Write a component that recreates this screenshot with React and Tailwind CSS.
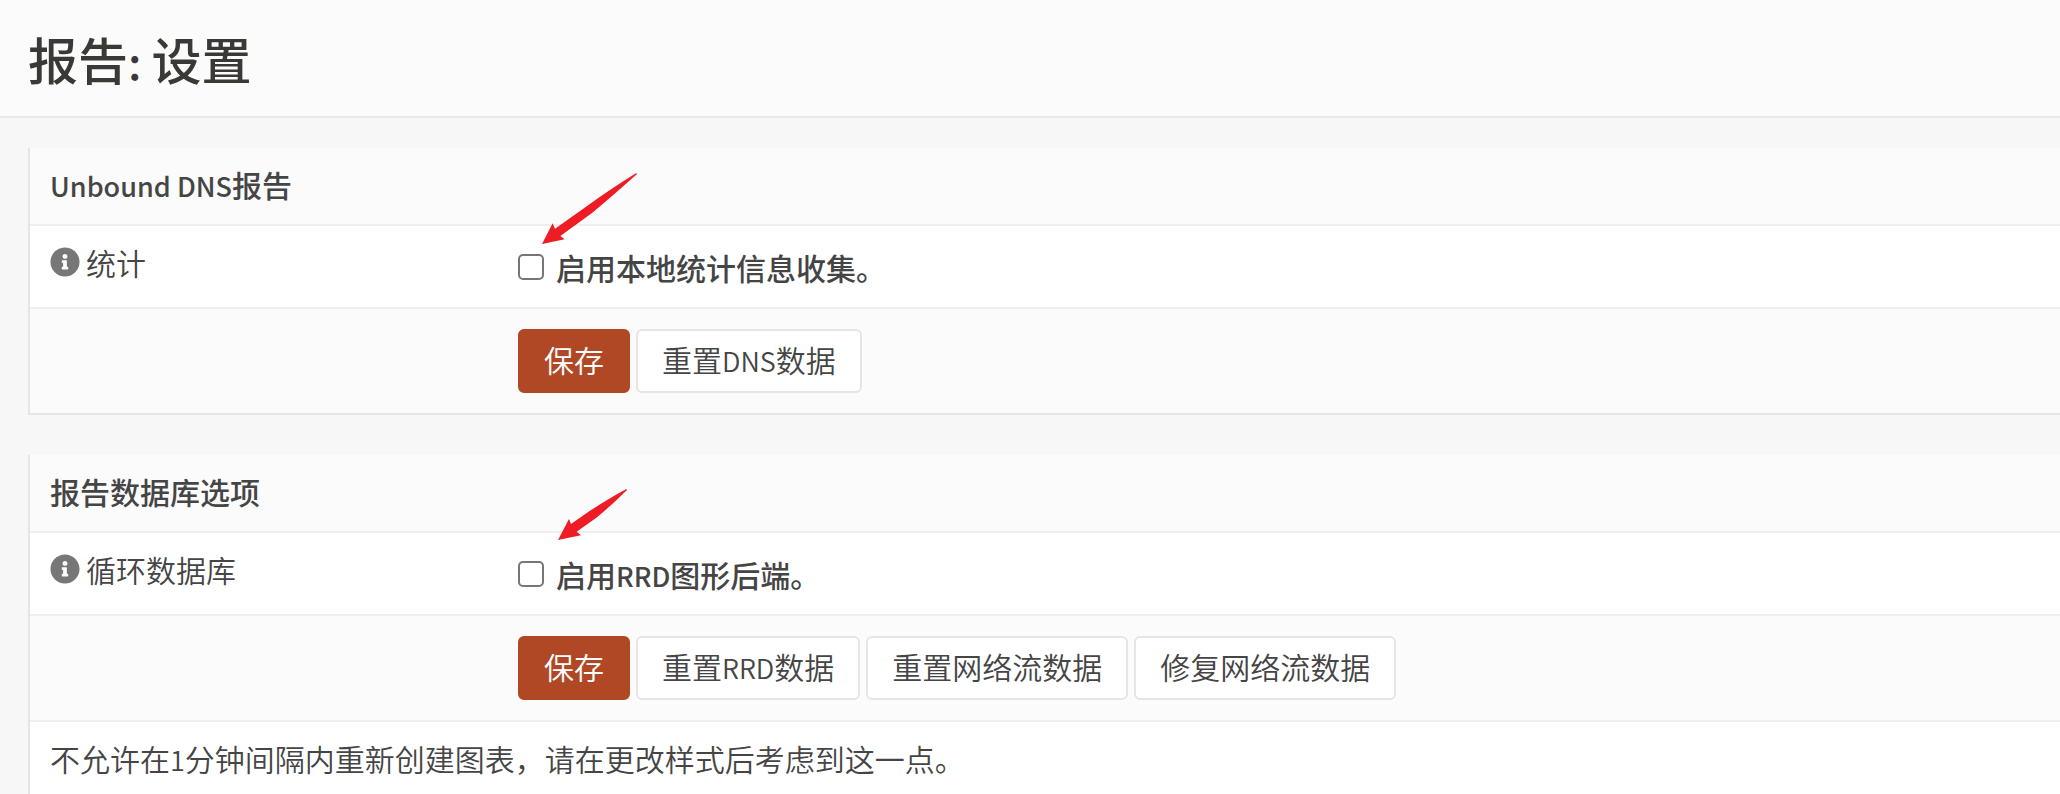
import React from "react";
import { FaInfoCircle } from "react-icons/fa";

const sections = [
  {
    id: "unbound",
    title: "Unbound DNS报告",
    label: "统计",
    option: "启用本地统计信息收集。",
    actions: ["重置DNS数据"],
  },
  {
    id: "rrd",
    title: "报告数据库选项",
    label: "循环数据库",
    option: "启用RRD图形后端。",
    actions: ["重置RRD数据", "重置网络流数据", "修复网络流数据"],
    note: "不允许在1分钟间隔内重新创建图表，请在更改样式后考虑到这一点。",
  },
];

// latin runs are set a little smaller than the chinese text around them
function Mixed({ text }) {
  return text.split(/([A-Za-z0-9 ]+)/).map((part, i) =>
    i % 2 ? (
      <span key={i} className="text-[27px] leading-none">
        {part}
      </span>
    ) : (
      part
    )
  );
}

function LongArrow() {
  return (
    <svg
      className="absolute left-[24px] top-[-74px] w-[95px] h-[71px] pointer-events-none"
      viewBox="0 0 285 213"
      fill="#ee1c25"
      aria-hidden="true"
    >
      <path d="M283 0 Q210 45 132 101 L39 167 L32 151 L0 213 L68 199 L55 189 L150 120 Q215 66 285 3 Z" />
    </svg>
  );
}

function ShortArrow() {
  return (
    <svg
      className="absolute left-[40px] top-[-65px] w-[69px] h-[51px] pointer-events-none"
      viewBox="0 0 207 153"
      fill="#ee1c25"
      aria-hidden="true"
    >
      <path d="M205 0 Q155 27 98 64 L39 105 L33 90 L0 153 L69 139 L56 128 L115 86 Q160 50 207 3 Z" />
    </svg>
  );
}

function Section({ section, arrow }) {
  return (
    <table className="w-full border-l-2 border-b-2 border-[#e5e5e5] border-separate border-spacing-0 text-left text-[30px] leading-[40px] font-[350] text-[#454545]">
      <thead>
        <tr className="bg-[#fbfbfb]">
          <th colSpan={2} className="px-5 pt-4 pb-5 font-medium">
            <Mixed text={section.title} />
          </th>
        </tr>
      </thead>
      <tbody>
        <tr className="bg-white">
          <td className="w-[488px] border-t-2 border-[#eeeeee] px-5 pt-4 pb-5 align-top">
            <div className="flex items-center gap-[6px]">
              <FaInfoCircle className="size-[30px] text-[#777777]" />
              <label htmlFor={section.id}>{section.label}</label>
            </div>
          </td>
          <td className="border-t-2 border-[#eeeeee] pt-[21px] pb-5 align-top">
            <div className="relative flex items-center gap-3">
              <input
                id={section.id}
                type="checkbox"
                className="size-[26px] appearance-none rounded-[5px] border-2 border-[#767676] bg-white"
              />
              <strong className="font-medium">
                <Mixed text={section.option} />
              </strong>
              {arrow}
            </div>
          </td>
        </tr>
        <tr className="bg-[#fbfbfb]">
          <td className="border-t-2 border-[#eeeeee]"></td>
          <td className="border-t-2 border-[#eeeeee] py-5">
            <div className="flex gap-[6px]">
              <button
                type="submit"
                className="h-16 rounded-md border-2 border-[#b04825] bg-[#b04825] px-6 pb-1 text-white"
              >
                保存
              </button>
              {section.actions.map((action) => (
                <button
                  key={action}
                  type="button"
                  className="h-16 rounded-md border-2 border-[#e5e5e5] bg-white px-6 pb-1"
                >
                  <Mixed text={action} />
                </button>
              ))}
            </div>
          </td>
        </tr>
        {section.note && (
          <tr className="bg-white">
            <td colSpan={2} className="border-t-2 border-[#eeeeee] px-5 pt-4 pb-5">
              <Mixed text={section.note} />
            </td>
          </tr>
        )}
      </tbody>
    </table>
  );
}

function App() {
  return (
    <div className="h-screen overflow-hidden bg-[#f7f7f7] font-['Noto_Sans_CJK_SC',sans-serif]">
      <header className="border-b-2 border-[#e9e9e9] bg-[#fbfbfb] px-7 py-7">
        <h1 className="text-[50px] leading-[60px] font-medium text-[#3a3936]">
          报告<span className="text-[45px] leading-none">: </span>设置
        </h1>
      </header>

      <main className="flex flex-col gap-10 pt-[30px] pl-7">
        <Section section={sections[0]} arrow={<LongArrow />} />
        <Section section={sections[1]} arrow={<ShortArrow />} />
      </main>
    </div>
  );
}

export default App;
